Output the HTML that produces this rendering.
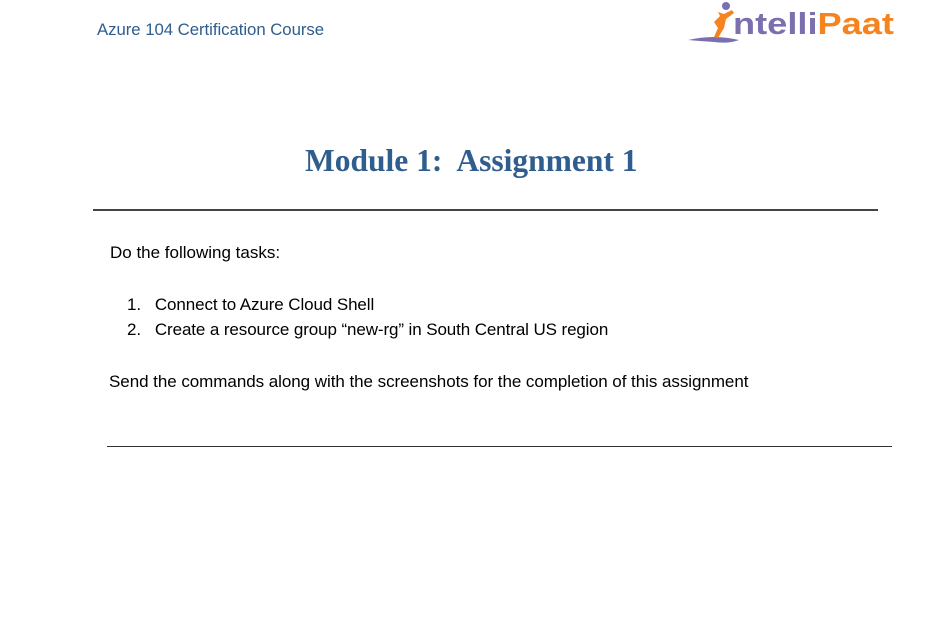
<!DOCTYPE html>
<html><head><meta charset="utf-8"><style>
body{margin:0;width:951px;height:625px;background:#fff;position:relative;overflow:hidden;font-family:"Liberation Sans",sans-serif;color:#000}
.a{position:absolute;white-space:nowrap}
</style></head><body>
<div class="a" style="left:97px;top:20px;font-size:16.8px;color:#2f5d8e;letter-spacing:-0.05px">Azure 104 Certification Course</div>
<svg class="a" style="left:684px;top:0" width="220" height="50" viewBox="0 0 220 50">
<path d="M4 40 Q30 34 55 40 Q45 44 30 42 Q15 41 4 40Z" fill="#7b6fae"/>
<circle cx="42" cy="6" r="4" fill="#7b6fae"/>
<path d="M34 12 L40 14 L48 10 L50 13 L42 19 L40 28 L34 38 L30 37 L34 28 L30 22 L36 16Z" fill="#f5841f"/>
<text x="49" y="34" font-family="Liberation Sans" font-weight="bold" font-size="31" fill="#7b6fae" textLength="161" lengthAdjust="spacingAndGlyphs">ntelli<tspan fill="#f5841f">Paat</tspan></text>
</svg>
<div class="a" style="left:305px;top:143px;font-family:'Liberation Serif',serif;font-weight:bold;font-size:31.5px;color:#2f5d8e">Module 1:&nbsp; Assignment 1</div>
<div class="a" style="left:93px;top:209px;width:785px;height:2px;background:#444"></div>
<div class="a" style="left:110px;top:243px;font-size:17px">Do the following tasks:</div>
<div class="a" style="left:127px;top:295px;font-size:17px;letter-spacing:-0.1px">1.&nbsp;&nbsp;&nbsp;Connect to Azure Cloud Shell</div>
<div class="a" style="left:127px;top:320px;font-size:17px;letter-spacing:-0.1px">2.&nbsp;&nbsp;&nbsp;Create a resource group “new-rg” in South Central US region</div>
<div class="a" style="left:109px;top:372px;font-size:17px;letter-spacing:-0.05px">Send the commands along with the screenshots for the completion of this assignment</div>
<div class="a" style="left:107px;top:446px;width:785px;height:1px;background:#333"></div>
</body></html>
